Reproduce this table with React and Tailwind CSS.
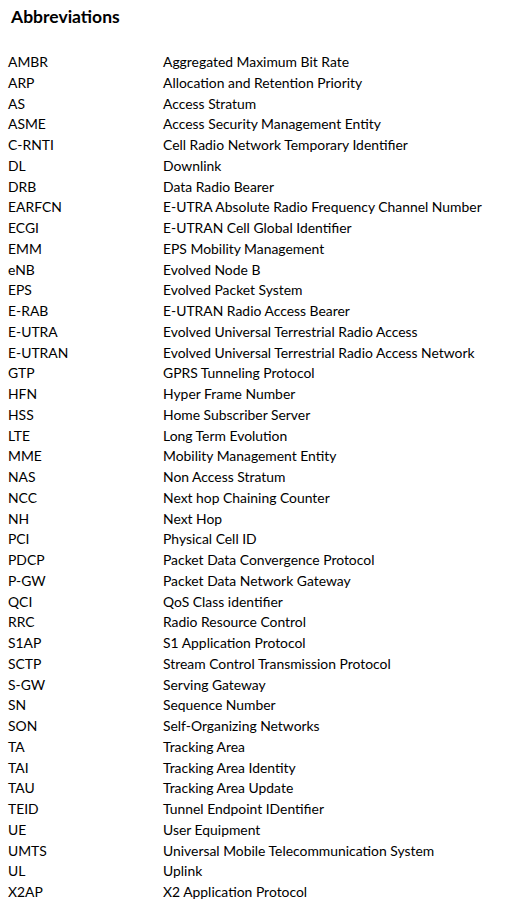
import React from "react";

const rows = [
  ["AMBR", "Aggregated Maximum Bit Rate"],
  ["ARP", "Allocation and Retention Priority"],
  ["AS", "Access Stratum"],
  ["ASME", "Access Security Management Entity"],
  ["C-RNTI", "Cell Radio Network Temporary Identifier"],
  ["DL", "Downlink"],
  ["DRB", "Data Radio Bearer"],
  ["EARFCN", "E-UTRA Absolute Radio Frequency Channel Number"],
  ["ECGI", "E-UTRAN Cell Global Identifier"],
  ["EMM", "EPS Mobility Management"],
  ["eNB", "Evolved Node B"],
  ["EPS", "Evolved Packet System"],
  ["E-RAB", "E-UTRAN Radio Access Bearer"],
  ["E-UTRA", "Evolved Universal Terrestrial Radio Access"],
  ["E-UTRAN", "Evolved Universal Terrestrial Radio Access Network"],
  ["GTP", "GPRS Tunneling Protocol"],
  ["HFN", "Hyper Frame Number"],
  ["HSS", "Home Subscriber Server"],
  ["LTE", "Long Term Evolution"],
  ["MME", "Mobility Management Entity"],
  ["NAS", "Non Access Stratum"],
  ["NCC", "Next hop Chaining Counter"],
  ["NH", "Next Hop"],
  ["PCI", "Physical Cell ID"],
  ["PDCP", "Packet Data Convergence Protocol"],
  ["P-GW", "Packet Data Network Gateway"],
  ["QCI", "QoS Class identifier"],
  ["RRC", "Radio Resource Control"],
  ["S1AP", "S1 Application Protocol"],
  ["SCTP", "Stream Control Transmission Protocol"],
  ["S-GW", "Serving Gateway"],
  ["SN", "Sequence Number"],
  ["SON", "Self-Organizing Networks"],
  ["TA", "Tracking Area"],
  ["TAI", "Tracking Area Identity"],
  ["TAU", "Tracking Area Update"],
  ["TEID", "Tunnel Endpoint IDentifier"],
  ["UE", "User Equipment"],
  ["UMTS", "Universal Mobile Telecommunication System"],
  ["UL", "Uplink"],
  ["X2AP", "X2 Application Protocol"],
];

export default function App() {
  return (
    <div className="w-[513px] h-[916px] bg-white text-black font-['Lato',sans-serif]">
      <h1 className="pl-[11px] pt-[6px] text-[17.5px] leading-[22px] font-bold">Abbreviations</h1>
      <div className="mt-[24px] pl-[8px] text-[13.9px] leading-[20.75px]">
        {rows.map(([abbr, full]) => (
          <div key={abbr} className="flex">
            <span className="w-[155px] shrink-0">{abbr}</span>
            <span>{full}</span>
          </div>
        ))}
      </div>
    </div>
  );
}
